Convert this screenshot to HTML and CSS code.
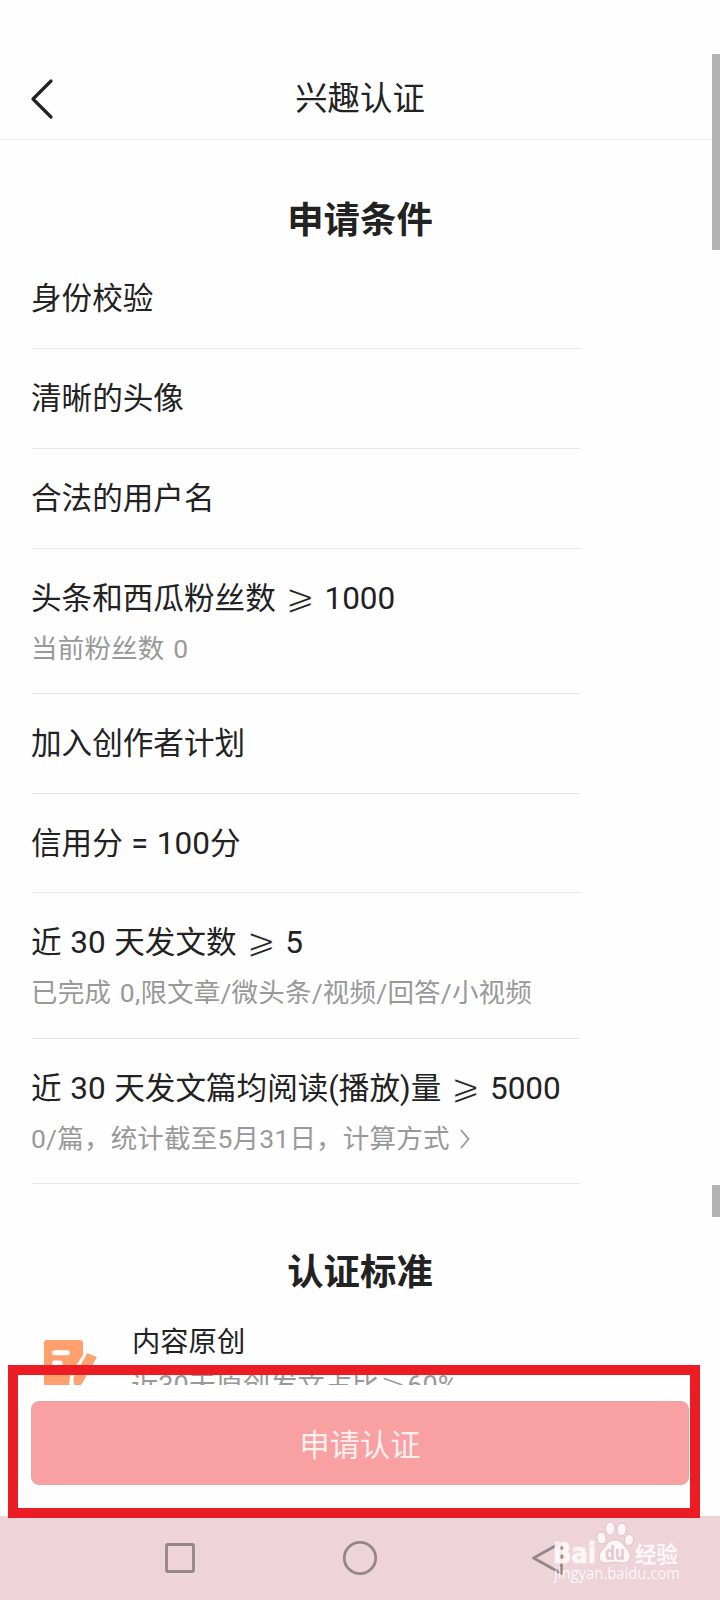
FILE: index.html
```html
<!DOCTYPE html>
<html lang="zh-CN">
<head>
    <meta charset="UTF-8">
    <meta name="viewport" content="width=device-width, initial-scale=1.0">
    <title>兴趣认证</title>
    <link rel="stylesheet" href="styles.css">
</head>
<body>
    <div class="page">
        <header class="header">
            <svg class="back" width="24" height="42" viewBox="0 0 24 42">
                <path d="M21 3 L3 21 L21 39" fill="none" stroke="#222" stroke-width="3.2" stroke-linecap="round" stroke-linejoin="round"/>
            </svg>
            <h1>兴趣认证</h1>
        </header>

        <main class="content">
            <h2>申请条件</h2>
            <ul class="conditions">
                <li><p>身份校验</p></li>
                <li><p>清晰的头像</p></li>
                <li><p>合法的用户名</p></li>
                <li class="tall">
                    <p>头条和西瓜粉丝数 <span class="ge">⩾</span> <span class="num">1000</span></p>
                    <small>当前粉丝数 0</small>
                </li>
                <li><p>加入创作者计划</p></li>
                <li><p>信用分 = <span class="num">100</span>分</p></li>
                <li class="tall">
                    <p>近 <span class="num">30</span> 天发文数 <span class="ge">⩾</span> <span class="num">5</span></p>
                    <small>已完成 0,限文章/微头条/视频/回答/小视频</small>
                </li>
                <li class="tall">
                    <p>近 <span class="num">30</span> 天发文篇均阅读(播放)量 <span class="ge">⩾</span> <span class="num">5000</span></p>
                    <small>0/篇，统计截至5月31日，计算方式<svg class="more" width="12" height="22" viewBox="0 0 12 22"><path d="M2 2 L9.5 11 L2 20" fill="none" stroke="#999" stroke-width="1.8"/></svg></small>
                </li>
            </ul>

            <h2 class="second">认证标准</h2>
            <div class="standard">
                <svg class="doc" width="56" height="56" viewBox="0 0 56 56">
                    <path d="M3 0 H36 Q39 0 39 3 V15 L28 32 Q24 40 26 46 H3 Q0 46 0 43 V3 Q0 0 3 0 Z" fill="#ffa06e"/>
                    <path d="M10.500 12.800 H23.500 M10.500 23 H16" stroke="#fff" stroke-width="5" stroke-linecap="round"/>
                    <path d="M43.500 14 L52 17.500 L37 44 L31 45 L30 38 Z" fill="#fca46f" stroke="#fca46f" stroke-width="1.5" stroke-linejoin="round"/>
                </svg>
                <div>
                    <h3>内容原创</h3>
                    <small>近30天原创发文占比<span class="ge">⩾</span>60%</small>
                </div>
            </div>
        </main>

        <footer class="footer">
            <button class="apply">申请认证</button>
        </footer>

        <nav class="nav">
            <svg width="36" height="36" viewBox="0 0 36 36"><rect x="4.500" y="4.500" width="27" height="27" rx="1.500"/></svg>
            <svg width="36" height="36" viewBox="0 0 36 36"><circle cx="18" cy="18" r="15.700"/></svg>
            <svg class="nav-back" width="36" height="36" viewBox="0 0 36 36"><path d="M31.500 2.500 V33.500 L3.500 18 Z" stroke-linejoin="round"/></svg>
        </nav>

        <div class="scrollbar first"></div>
        <div class="scrollbar last"></div>
        <div class="highlight"></div>

        <svg class="watermark" width="140" height="76" viewBox="0 0 140 76">
            <g fill="#fff" fill-opacity="0.8" stroke="#dcbcc2" stroke-width="0.800">
                <ellipse cx="51.500" cy="26" rx="4.600" ry="6" transform="rotate(-12 51.5 26)"/>
                <ellipse cx="60.300" cy="16.500" rx="4.600" ry="6.400"/>
                <ellipse cx="71.700" cy="17.500" rx="4.600" ry="6.400" transform="rotate(8 71.7 17.5)"/>
                <ellipse cx="79" cy="28" rx="4.500" ry="5.700" transform="rotate(15 79 28)"/>
                <path d="M65 28 C72 28 73 33 77 37 C83 43 80 51 73 51 C69 51 68 50 65 50 C62 50 60 51 56 51 C48 51 47 43 53 37 C57 33 58 28 65 28 Z"/>
            </g>
            <text class="wm-logo" x="3" y="50.500" textLength="43" lengthAdjust="spacingAndGlyphs">Bai</text>
            <text class="wm-du" x="55" y="48" textLength="20" lengthAdjust="spacingAndGlyphs">du</text>
            <text class="wm-cn" x="85" y="49.500" textLength="43">经验</text>
            <text class="wm-url" x="4" y="67" textLength="126" lengthAdjust="spacingAndGlyphs">jingyan.baidu.com</text>
        </svg>
    </div>
</body>
</html>
```
FILE: styles.css
```css
* {
    box-sizing: border-box;
    margin: 0;
    padding: 0;
}
body {
    font-family: Roboto, "Noto Sans CJK SC", sans-serif;
    color: #222;
    background-color: #fefefe;
}
.page {
    position: relative;
    width: 720px;
    height: 1600px;
    display: flex;
    flex-direction: column;
    overflow: hidden;
}
.header {
    height: 140px;
    padding: 59px 30px 0;
    display: grid;
    grid-template-columns: 24px 1fr 24px;
    border-bottom: 1px solid #eee;
}
.back {
    margin-top: 19px;
}
h1 {
    font-size: 32.4px;
    font-weight: 400;
    line-height: 80px;
    text-align: center;
}
.content {
    height: 1245px;
    overflow: hidden;
}
h2 {
    font-size: 36.4px;
    font-weight: 700;
    line-height: 56px;
    padding: 53px 0 0;
    text-align: center;
}
.conditions {
    list-style: none;
    width: 548px;
    margin-left: 32px;
}
.conditions li {
    height: 99.85px;
    padding-top: 25px;
    border-bottom: 1px solid #e6e6e6;
    white-space: nowrap;
}
.conditions .tall {
    height: 145.2px;
    padding-top: 25px;
}
p {
    height: 50px;
    font-size: 30.6px;
    line-height: 50px;
    margin-left: -1px;
    word-spacing: 1px;
}
.num {
    font-size: 31.5px;
    line-height: 1;
}
small {
    display: block;
    font-size: 26.5px;
    line-height: 50px;
    color: #999;
}
.conditions small {
    margin-left: -1px;
    letter-spacing: 0.2px;
    word-spacing: 2px;
}
.ge {
    font-family: "Noto Sans CJK SC", "DejaVu Sans", sans-serif;
    font-size: 1.15em;
    line-height: 1;
    margin: 0 1px;
    -webkit-text-stroke: 0.9px #fefefe;
}
.more {
    margin-left: 9px;
    vertical-align: -2px;
}
.second {
    padding: 61px 0 0;
}
.standard {
    display: flex;
    padding: 19px 44px 0;
}
.doc {
    margin: 20px 32px 0 0;
}
h3 {
    margin-top: 1px;
    font-size: 28.3px;
    font-weight: 400;
    line-height: 44px;
}
.standard small {
    font-size: 27.2px;
    line-height: 43px;
    margin-left: -1px;
    white-space: nowrap;
}
.footer {
    height: 131px;
    padding: 16px 31px 0;
    background-color: #fefefe;
}
.apply {
    width: 658px;
    height: 84px;
    border: 1px solid #e8a3aa;
    border-radius: 8px;
    background-color: #f8a0a2;
    color: #fff0f0;
    font-family: inherit;
    font-size: 30.2px;
}
.nav {
    height: 84px;
    display: flex;
    justify-content: center;
    align-items: center;
    gap: 144px;
    background-color: #eed3d8;
}
.nav svg {
    fill: none;
    stroke: #938788;
    stroke-width: 2.8;
}
.nav .nav-back {
    margin: 0 -8px 0 8px;
}
.scrollbar {
    position: absolute;
    right: 0;
    width: 8px;
    background-color: #b3b3b3;
}
.scrollbar.first {
    top: 54px;
    height: 196px;
}
.scrollbar.last {
    top: 1185px;
    height: 32px;
}
.highlight {
    position: absolute;
    left: 8px;
    top: 1365px;
    width: 692px;
    height: 153px;
    border: 10px solid #ec1c24;
}
.watermark {
    position: absolute;
    left: 550px;
    top: 1512px;
    fill: #fff;
    fill-opacity: 0.85;
}
.wm-logo {
    font: 700 29px "DejaVu Sans", sans-serif;
    stroke: #fbf0f2;
    stroke-width: 1.2;
}
.wm-cn {
    font: 700 21.5px "Noto Sans CJK SC", sans-serif;
}
.wm-du {
    font: 700 20px "DejaVu Sans", sans-serif;
    fill: #dfc0c7;
}
.wm-url {
    font: 400 15.5px "Open Sans", sans-serif;
}
```
